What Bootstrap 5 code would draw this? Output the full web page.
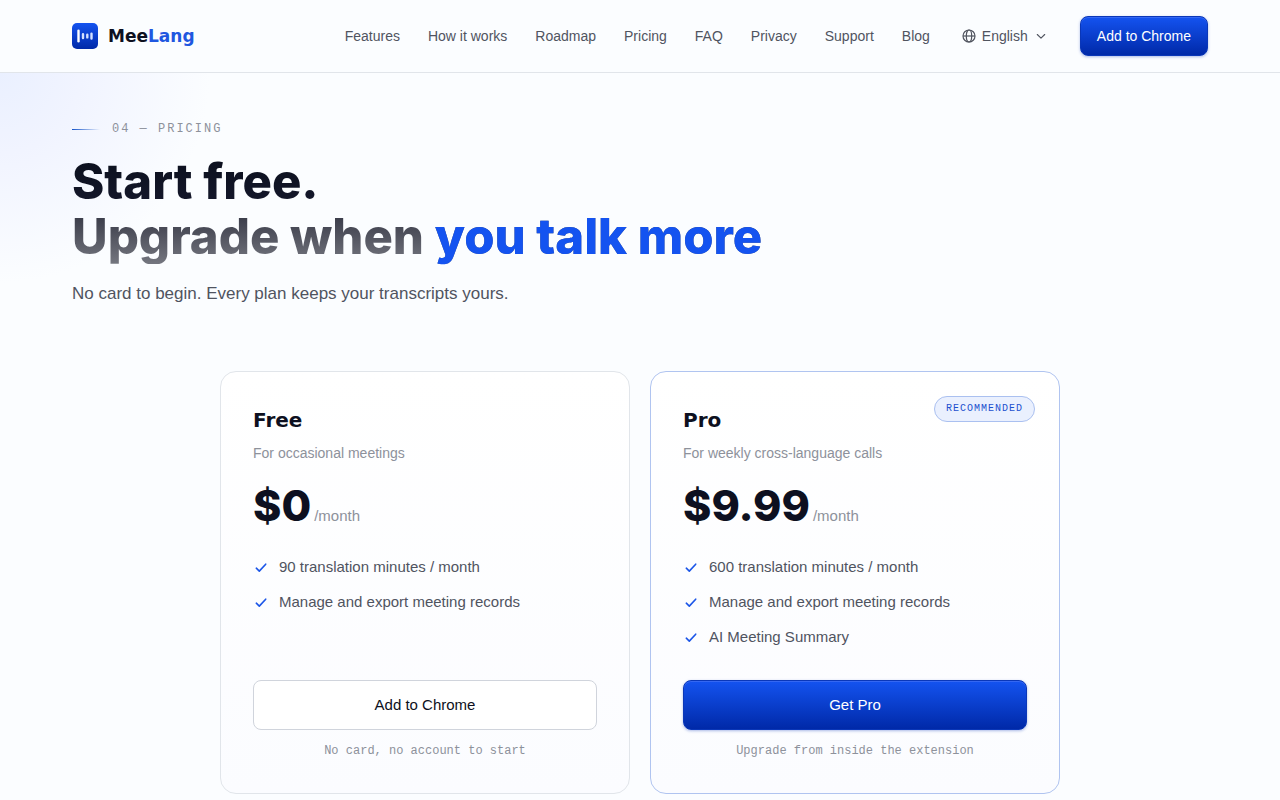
<!DOCTYPE html>
<html lang="en">
<head>
<meta charset="utf-8">
<meta name="viewport" content="width=device-width, initial-scale=1">
<title>MeeLang – Pricing</title>
<link href="https://cdn.jsdelivr.net/npm/bootstrap@5.3.0/dist/css/bootstrap.min.css" rel="stylesheet">
<style>
  :root { --ink: #0d1020; --soft: #50545f; --mute: #8d919b; --brand: #1453f0; --line: #e1e5ea; }
  body { font-family: "Liberation Sans", Arial, sans-serif; color: var(--ink); background: #fbfdff; }
  .wrap { max-width: 1184px; padding: 0 24px; margin: 0 auto; }
  .site-header { background: #fbfdff; border-bottom: 1px solid var(--line); }
  .bar { min-height: 72px; }
  .wide { font-family: "DejaVu Sans", sans-serif; font-weight: 700; }
  .brand-link { gap: 10px; }
  .brand-name { font-size: 17px; line-height: 24px; color: var(--ink); }
  .brand-name span { color: #1f57e0; }
  .site-nav { gap: 28px; font-size: 14px; line-height: 20px; }
  .site-nav a, .lang, .lang select { color: var(--soft); text-decoration: none; }
  .lang { gap: 6px; margin: 0 34px 0 32px; font-size: 14px; line-height: 20px; }
  .lang select { appearance: none; border: 0; background: transparent; padding: 0; margin-right: 2px; }
  .btn-brand { color: #fff; background: linear-gradient(#1453f0, #0029a8); border: 1px solid #0a37b8; border-radius: 8px;
    box-shadow: inset 0 1px 0 #3467f2, 0 1px 3px #0b36b855; }
  .btn-brand:hover { color: #fff; background: #0a37b8; }
  .btn-top { height: 40px; padding: 0 16px; font-size: 14px; }
  .pricing { background: radial-gradient(circle at 0 0, #eaf0ff 0, #f1f4ff 80px, #fbfdff00 210px); padding: 46px 0 40px; }
  .mono { font-family: "Liberation Mono", monospace; font-size: 12px; line-height: 20px; color: var(--mute); }
  .eyebrow { gap: 12px; letter-spacing: 2px; }
  .eyebrow::before { content: ""; width: 28px; height: 1px; background: linear-gradient(90deg, #1453c8, #1453f000); }
  h1 { font-family: Inter, sans-serif; font-weight: 800; font-size: 49px; line-height: 55px; margin: 15px 0 17px; }
  .fade-text { background: linear-gradient(#0a0f1c 0, #14172a 42%, #3c3e4b 58%, #74767f 100%); background-clip: text; -webkit-background-clip: text; color: transparent; }
  .fade-text em { font-style: normal; color: var(--brand); }
  .intro { font-size: 17px; line-height: 26px; color: var(--soft); margin: 0 0 64px; }
  .plans { max-width: 840px; margin: 0 auto; gap: 20px; }
  .plan { flex: 1 1 300px; padding: 32px; border: 1px solid var(--line); border-radius: 16px; background: linear-gradient(#fff, #fbfcff); }
  .plan-pro { border-color: #b0c4f0; }
  .plan h2 { font-size: 20px; line-height: 32px; margin: 0 0 6px; }
  .plan-for { font-size: 14px; line-height: 22px; color: var(--mute); margin: 0 0 16px; }
  .cost { gap: 3px; }
  .price { font-family: Inter, sans-serif; font-weight: 800; font-size: 43px; line-height: 50px; }
  .per { font-size: 15px; color: var(--mute); }
  .perks { font-size: 15px; line-height: 23px; color: var(--soft); gap: 12px; margin: 25px 0 32px; }
  .perks li { gap: 10px; }
  .btn-plan { height: 50px; font-size: 15px; border-radius: 8px; }
  .btn-line { border: 1px solid #d0d4dc; background: #fff; color: var(--ink); }
  .note { margin: 11px 0 0; }
  .tag { right: 24px; top: 24px; padding: 2px 11px; border: 1px solid #aac0f0; border-radius: 13px; background: #eaf0fe; color: #1c50cf; font-size: 10px; letter-spacing: 1px; }
</style>
</head>
<body>
<header class="site-header">
  <div class="wrap bar d-flex align-items-center">
    <a href="#" class="brand-link d-flex align-items-center text-decoration-none me-auto">
      <svg width="26" height="26" viewBox="0 0 26 26" aria-hidden="true">
        <defs><linearGradient id="lg" x2="0" y2="1"><stop stop-color="#1453f0"/><stop offset="1" stop-color="#0029a8"/></linearGradient></defs>
        <rect width="26" height="26" rx="5" fill="url(#lg)"/>
        <g stroke="#d3e0ff" stroke-width="2.400" stroke-linecap="round"><path stroke="#fff" d="M6.500 7.700v10.600"/><path d="M11 11.200v3.800M15.300 11.800v2.600M19.500 10.600v5"/></g>
      </svg>
      <span class="wide brand-name">Mee<span>Lang</span></span>
    </a>
    <nav class="site-nav d-flex" aria-label="Main">
      <a href="#">Features</a><a href="#">How it works</a><a href="#">Roadmap</a><a href="#">Pricing</a><a href="#">FAQ</a><a href="#">Privacy</a><a href="#">Support</a><a href="#">Blog</a>
    </nav>
    <label class="lang d-flex align-items-center">
      <svg width="14" height="14" viewBox="0 0 14 14" fill="none" stroke="currentColor" stroke-width="1.2" aria-hidden="true"><circle cx="7" cy="7" r="6"/><ellipse cx="7" cy="7" rx="2.7" ry="6"/><path d="M1 7h12"/></svg>
      <select aria-label="Language"><option>English</option></select>
      <svg width="10" height="10" viewBox="0 0 10 10" fill="none" stroke="currentColor" stroke-width="1.1" stroke-linecap="round" stroke-linejoin="round" aria-hidden="true"><path d="M1.300 3.500 5 7.200l3.700-3.700"/></svg>
    </label>
    <button type="button" class="btn btn-brand btn-top">Add to Chrome</button>
  </div>
</header>
<main class="pricing">
  <div class="wrap">
    <div class="mono eyebrow d-flex align-items-center">04 — PRICING</div>
    <h1 class="fade-text">Start free.<br>Upgrade when <em>you talk more</em></h1>
    <p class="intro">No card to begin. Every plan keeps your transcripts yours.</p>
    <div class="plans d-flex flex-wrap">
      <section class="plan d-flex flex-column">
        <h2 class="wide">Free</h2>
        <p class="plan-for">For occasional meetings</p>
        <div class="cost d-flex align-items-baseline"><span class="price">$0</span><span class="per">/month</span></div>
        <ul class="perks list-unstyled d-flex flex-column">
          <li class="d-flex align-items-center"><svg width="16" height="16" viewBox="0 0 16 16" fill="none" stroke="#1c56e8" stroke-width="1.6" stroke-linecap="round" stroke-linejoin="round" aria-hidden="true"><path d="m3.300 9.200 3 2.900 6.400-6.900"/></svg>90 translation minutes / month</li>
          <li class="d-flex align-items-center"><svg width="16" height="16" viewBox="0 0 16 16" fill="none" stroke="#1c56e8" stroke-width="1.6" stroke-linecap="round" stroke-linejoin="round" aria-hidden="true"><path d="m3.300 9.200 3 2.900 6.400-6.900"/></svg>Manage and export meeting records</li>
        </ul>
        <button type="button" class="btn btn-plan btn-line mt-auto">Add to Chrome</button>
        <p class="mono note text-center">No card, no account to start</p>
      </section>
      <section class="plan plan-pro d-flex flex-column position-relative">
        <span class="mono tag position-absolute">RECOMMENDED</span>
        <h2 class="wide">Pro</h2>
        <p class="plan-for">For weekly cross-language calls</p>
        <div class="cost d-flex align-items-baseline"><span class="price">$9.99</span><span class="per">/month</span></div>
        <ul class="perks list-unstyled d-flex flex-column">
          <li class="d-flex align-items-center"><svg width="16" height="16" viewBox="0 0 16 16" fill="none" stroke="#1c56e8" stroke-width="1.6" stroke-linecap="round" stroke-linejoin="round" aria-hidden="true"><path d="m3.300 9.200 3 2.900 6.400-6.900"/></svg>600 translation minutes / month</li>
          <li class="d-flex align-items-center"><svg width="16" height="16" viewBox="0 0 16 16" fill="none" stroke="#1c56e8" stroke-width="1.6" stroke-linecap="round" stroke-linejoin="round" aria-hidden="true"><path d="m3.300 9.200 3 2.900 6.400-6.900"/></svg>Manage and export meeting records</li>
          <li class="d-flex align-items-center"><svg width="16" height="16" viewBox="0 0 16 16" fill="none" stroke="#1c56e8" stroke-width="1.6" stroke-linecap="round" stroke-linejoin="round" aria-hidden="true"><path d="m3.300 9.200 3 2.900 6.400-6.900"/></svg>AI Meeting Summary</li>
        </ul>
        <button type="button" class="btn btn-brand btn-plan mt-auto">Get Pro</button>
        <p class="mono note text-center">Upgrade from inside the extension</p>
      </section>
    </div>
  </div>
</main>
<script src="https://cdn.jsdelivr.net/npm/bootstrap@5.3.0/dist/js/bootstrap.bundle.min.js"></script>
</body>
</html>
